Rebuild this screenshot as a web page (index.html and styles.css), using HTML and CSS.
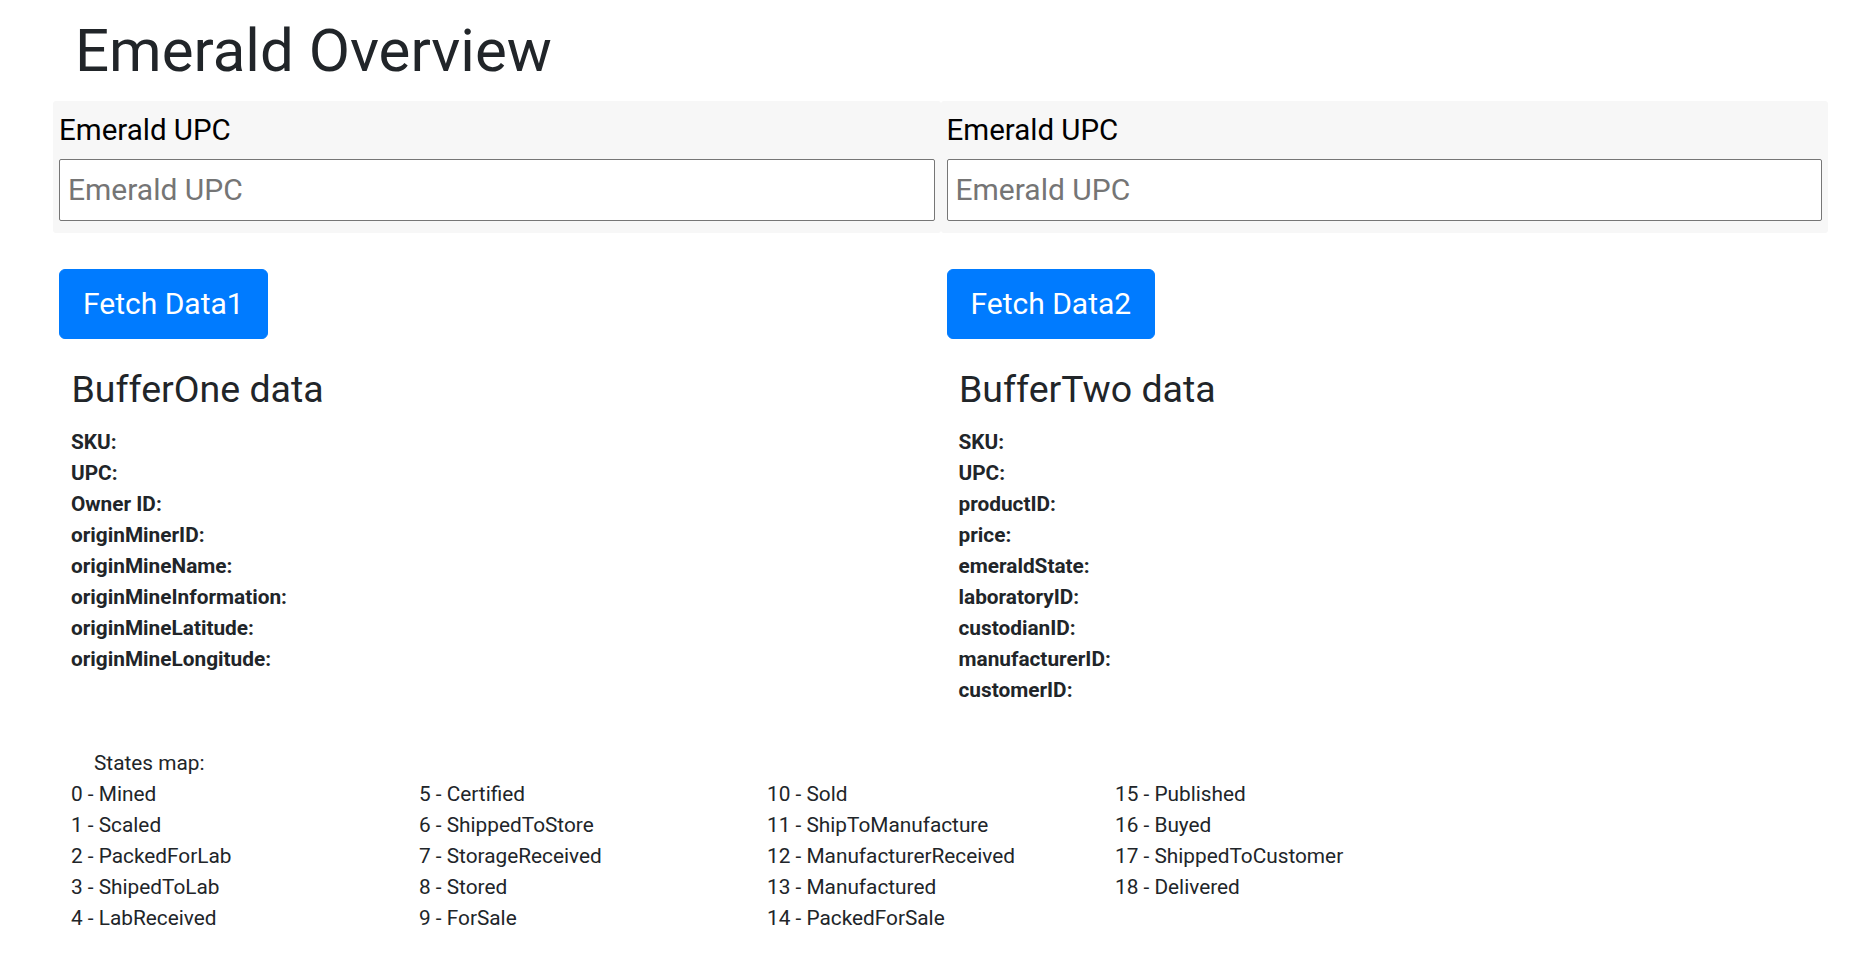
FILE: index.html
```html
<!DOCTYPE html>
<html lang="en">
<head>
<meta charset="utf-8">
<title>Emerald Overview</title>
<link rel="stylesheet" href="styles.css">
</head>
<body>
<h1 class="title">Emerald Overview</h1>
<div class="page">
  <form class="form-row">
    <div class="panel">
      <label class="field-label" for="upc1">Emerald UPC</label>
      <input class="field-input" id="upc1" type="text" placeholder="Emerald UPC">
    </div>
    <div class="panel">
      <label class="field-label" for="upc2">Emerald UPC</label>
      <input class="field-input" id="upc2" type="text" placeholder="Emerald UPC">
    </div>
  </form>

  <div class="buffers">
    <section class="buffer">
      <div class="btn-row"><button class="btn" type="button">Fetch Data1</button></div>
      <h3 class="buffer-title">BufferOne data</h3>
      <ul class="fields">
        <li>SKU:</li>
        <li>UPC:</li>
        <li>Owner ID:</li>
        <li>originMinerID:</li>
        <li>originMineName:</li>
        <li>originMineInformation:</li>
        <li>originMineLatitude:</li>
        <li>originMineLongitude:</li>
      </ul>
    </section>
    <section class="buffer">
      <div class="btn-row"><button class="btn" type="button">Fetch Data2</button></div>
      <h3 class="buffer-title">BufferTwo data</h3>
      <ul class="fields">
        <li>SKU:</li>
        <li>UPC:</li>
        <li>productID:</li>
        <li>price:</li>
        <li>emeraldState:</li>
        <li>laboratoryID:</li>
        <li>custodianID:</li>
        <li>manufacturerID:</li>
        <li>customerID:</li>
      </ul>
    </section>
  </div>

  <div class="states">
    <div class="states-title">States map:</div>
    <div class="states-grid">
      <ul class="states-col">
        <li>0 - Mined</li>
        <li>1 - Scaled</li>
        <li>2 - PackedForLab</li>
        <li>3 - ShipedToLab</li>
        <li>4 - LabReceived</li>
      </ul>
      <ul class="states-col">
        <li>5 - Certified</li>
        <li>6 - ShippedToStore</li>
        <li>7 - StorageReceived</li>
        <li>8 - Stored</li>
        <li>9 - ForSale</li>
      </ul>
      <ul class="states-col">
        <li>10 - Sold</li>
        <li>11 - ShipToManufacture</li>
        <li>12 - ManufacturerReceived</li>
        <li>13 - Manufactured</li>
        <li>14 - PackedForSale</li>
      </ul>
      <ul class="states-col">
        <li>15 - Published</li>
        <li>16 - Buyed</li>
        <li>17 - ShippedToCustomer</li>
        <li>18 - Delivered</li>
      </ul>
    </div>
  </div>
</div>
</body>
</html>
```

FILE: styles.css
```css
html, body {
  margin: 0;
  padding: 0;
  background: #ffffff;
}

body {
  font-family: Roboto, "Liberation Sans", Arial, sans-serif;
  color: #212529;
}

.title {
  margin: 0;
  padding: 15px 0 14px 75px;
  font-size: 60px;
  line-height: 72px;
  font-weight: 400;
  color: #212529;
}

.page {
  padding: 0 28px 40px 53px;
}

.form-row {
  display: grid;
  grid-template-columns: 1fr 1fr;
  margin: 0;
}

.panel {
  background: #f7f7f7;
  border-radius: 3px;
  padding: 7px 6px 12px;
}

.field-label {
  display: block;
  font-size: 29.5px;
  line-height: 44px;
  margin-bottom: 7px;
  color: #000000;
}

.field-input {
  display: block;
  box-sizing: border-box;
  width: 100%;
  height: 62px;
  margin: 0;
  padding: 0 8px 2px;
  border: 1px solid #767676;
  border-radius: 2px;
  background: #ffffff;
  font-family: Roboto, "Liberation Sans", Arial, sans-serif;
  font-size: 30px;
  color: #212529;
  outline: none;
}

.field-input::placeholder {
  color: #757575;
  opacity: 1;
}

.buffers {
  display: grid;
  grid-template-columns: 1fr 1fr;
}

.buffer {
  padding: 36px 6px 0;
}

.btn-row {
  display: flex;
}

.btn {
  margin: 0;
  padding: 11px 23px;
  border: 1px solid #007bff;
  border-radius: 6px;
  background: #007bff;
  color: #ffffff;
  font-family: Roboto, "Liberation Sans", Arial, sans-serif;
  font-size: 30px;
  line-height: 46px;
  font-weight: 400;
  cursor: pointer;
}

.buffer-title {
  margin: 28px 0 15px;
  padding-left: 12.5px;
  font-size: 37.5px;
  line-height: 45px;
  font-weight: 400;
  color: #212529;
}

.fields {
  list-style: none;
  margin: 0;
  padding: 0 0 0 12px;
  font-size: 20.8px;
  line-height: 31px;
  font-weight: 700;
}

.states {
  margin-top: 42px;
  padding-left: 18px;
  font-size: 20.8px;
  line-height: 31px;
}

.states-title {
  padding-left: 23px;
}

.states-grid {
  display: grid;
  grid-template-columns: repeat(4, 348px);
}

.states-col {
  list-style: none;
  margin: 0;
  padding: 0;
}
```
